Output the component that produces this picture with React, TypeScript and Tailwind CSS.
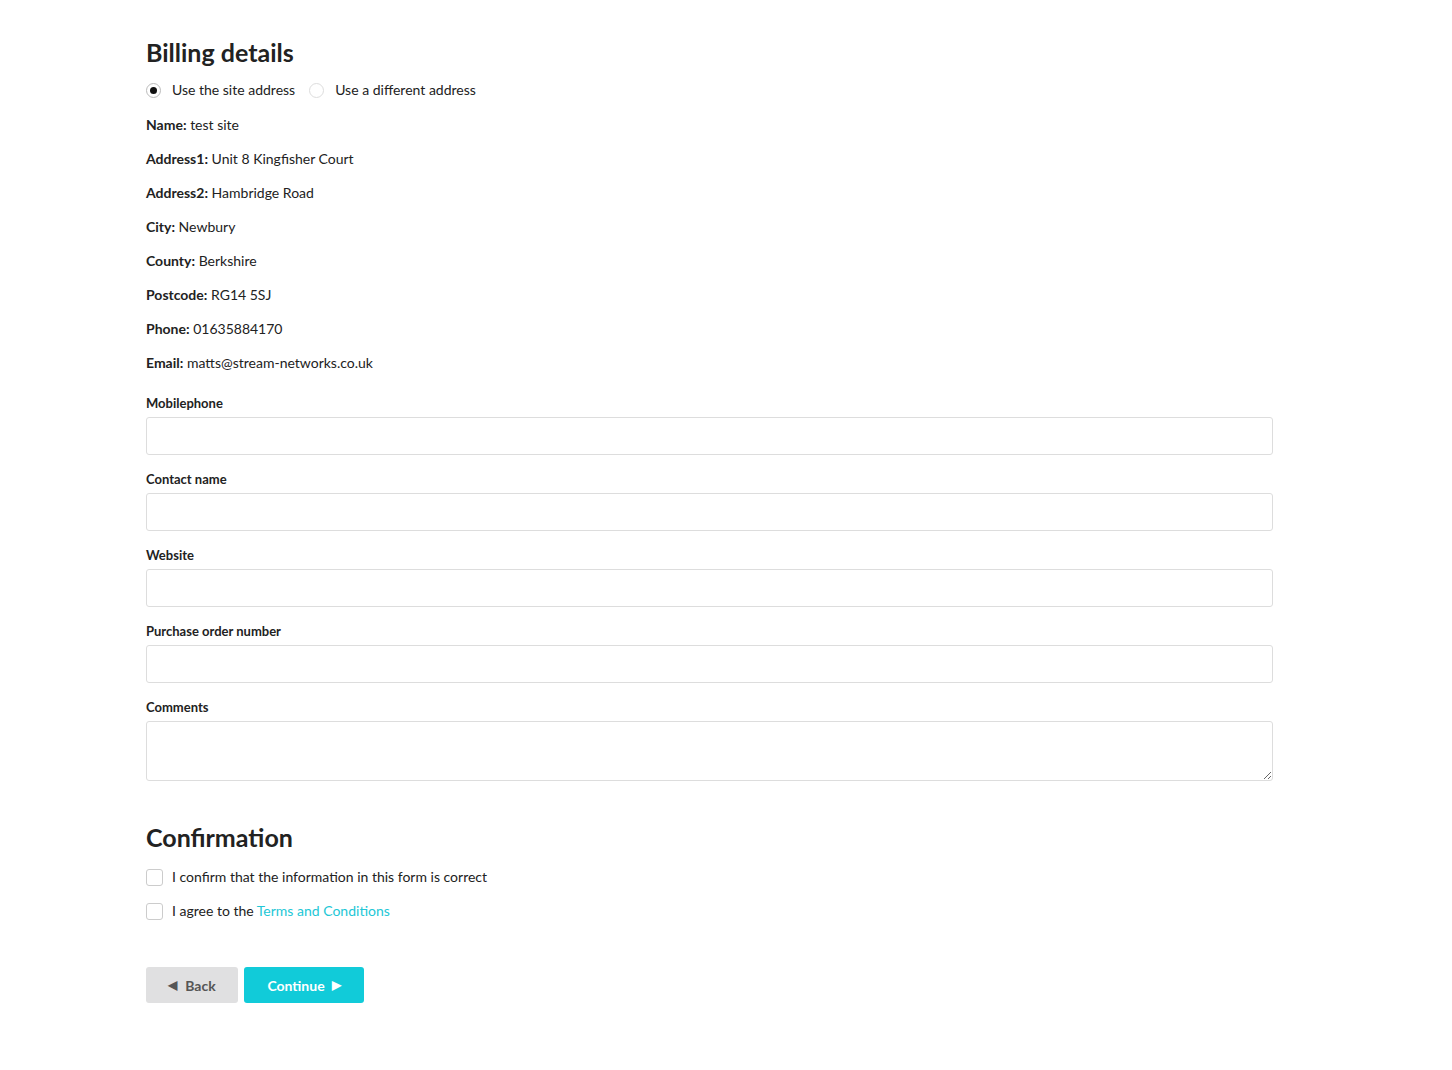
import React from "react";

const info: [string, string][] = [
  ["Name:", "test site"],
  ["Address1:", "Unit 8 Kingfisher Court"],
  ["Address2:", "Hambridge Road"],
  ["City:", "Newbury"],
  ["County:", "Berkshire"],
  ["Postcode:", "RG14 5SJ"],
  ["Phone:", "01635884170"],
  ["Email:", "matts@stream-networks.co.uk"],
];

const fields = ["Mobilephone", "Contact name", "Website", "Purchase order number"];

export default function App() {
  return (
    <div
      className="min-h-[1070px] w-full bg-white text-[#222]"
      style={{ fontFamily: "Lato, 'Open Sans', sans-serif" }}
    >
      <div className="ml-[146px] w-[1127px] pt-[36px]">
        <h2 className="h-[32px] text-[25px] font-bold leading-[32px] text-[#222]">Billing details</h2>
        <div className="mt-[12px] flex h-[20px] items-center text-[14px] leading-[20px]">
          <span className="flex h-[15px] w-[15px] items-center justify-center rounded-full border border-[#bbb]">
            <span className="h-[7px] w-[7px] rounded-full bg-[#111]" />
          </span>
          <span className="ml-[11px]">Use the site address</span>
          <span className="ml-[14px] h-[15px] w-[15px] rounded-full border border-[#ddd]" />
          <span className="ml-[11px]">Use a different address</span>
        </div>
        <div className="mt-[15px] flex flex-col gap-[14px]">
          {info.map(([k, v]) => (
            <p key={k} className="h-[20px] text-[14px] leading-[20px]">
              <b className="font-bold">{k}</b> {v}
            </p>
          ))}
        </div>
        <div className="mt-[20px] flex flex-col gap-[14px]">
          {fields.map((f) => (
            <div key={f} className="flex flex-col gap-[4px]">
              <label className="h-[20px] text-[13px] font-bold leading-[20px]">{f}</label>
              <input className="h-[38px] w-full rounded-[3px] border border-[#ddd] bg-white px-3 outline-none" />
            </div>
          ))}
          <div className="flex flex-col gap-[4px]">
            <label className="h-[20px] text-[13px] font-bold leading-[20px]">Comments</label>
            <textarea className="block h-[60px] w-full rounded-[3px] border border-[#ddd] bg-white px-3 outline-none" />
          </div>
        </div>
        <h2 className="mt-[40px] h-[32px] text-[25px] font-bold leading-[32px] text-[#222]">Confirmation</h2>
        <div className="mt-[14px] flex flex-col gap-[14px] text-[14px] leading-[20px]">
          <div className="flex h-[20px] items-center">
            <span className="h-[17px] w-[17px] rounded-[3px] border border-[#ccc]" />
            <span className="ml-[9px]">I confirm that the information in this form is correct</span>
          </div>
          <div className="flex h-[20px] items-center">
            <span className="h-[17px] w-[17px] rounded-[3px] border border-[#ccc]" />
            <span className="ml-[9px]">
              I agree to the <span className="text-[#22c7d6]">Terms and Conditions</span>
            </span>
          </div>
        </div>
        <div className="mt-[46px] flex gap-[6px]">
          <button className="flex h-[36px] w-[92px] items-center justify-center gap-[8px] rounded-[3px] bg-[#e0e0e1] text-[14px] font-bold text-[#555]">
            <span className="text-[12px] leading-none">◀</span>Back
          </button>
          <button className="flex h-[36px] w-[120px] items-center justify-center gap-[7px] rounded-[3px] bg-[#11cbd9] text-[14px] font-bold text-white">
            Continue<span className="text-[12px] leading-none">▶</span>
          </button>
        </div>
      </div>
    </div>
  );
}
